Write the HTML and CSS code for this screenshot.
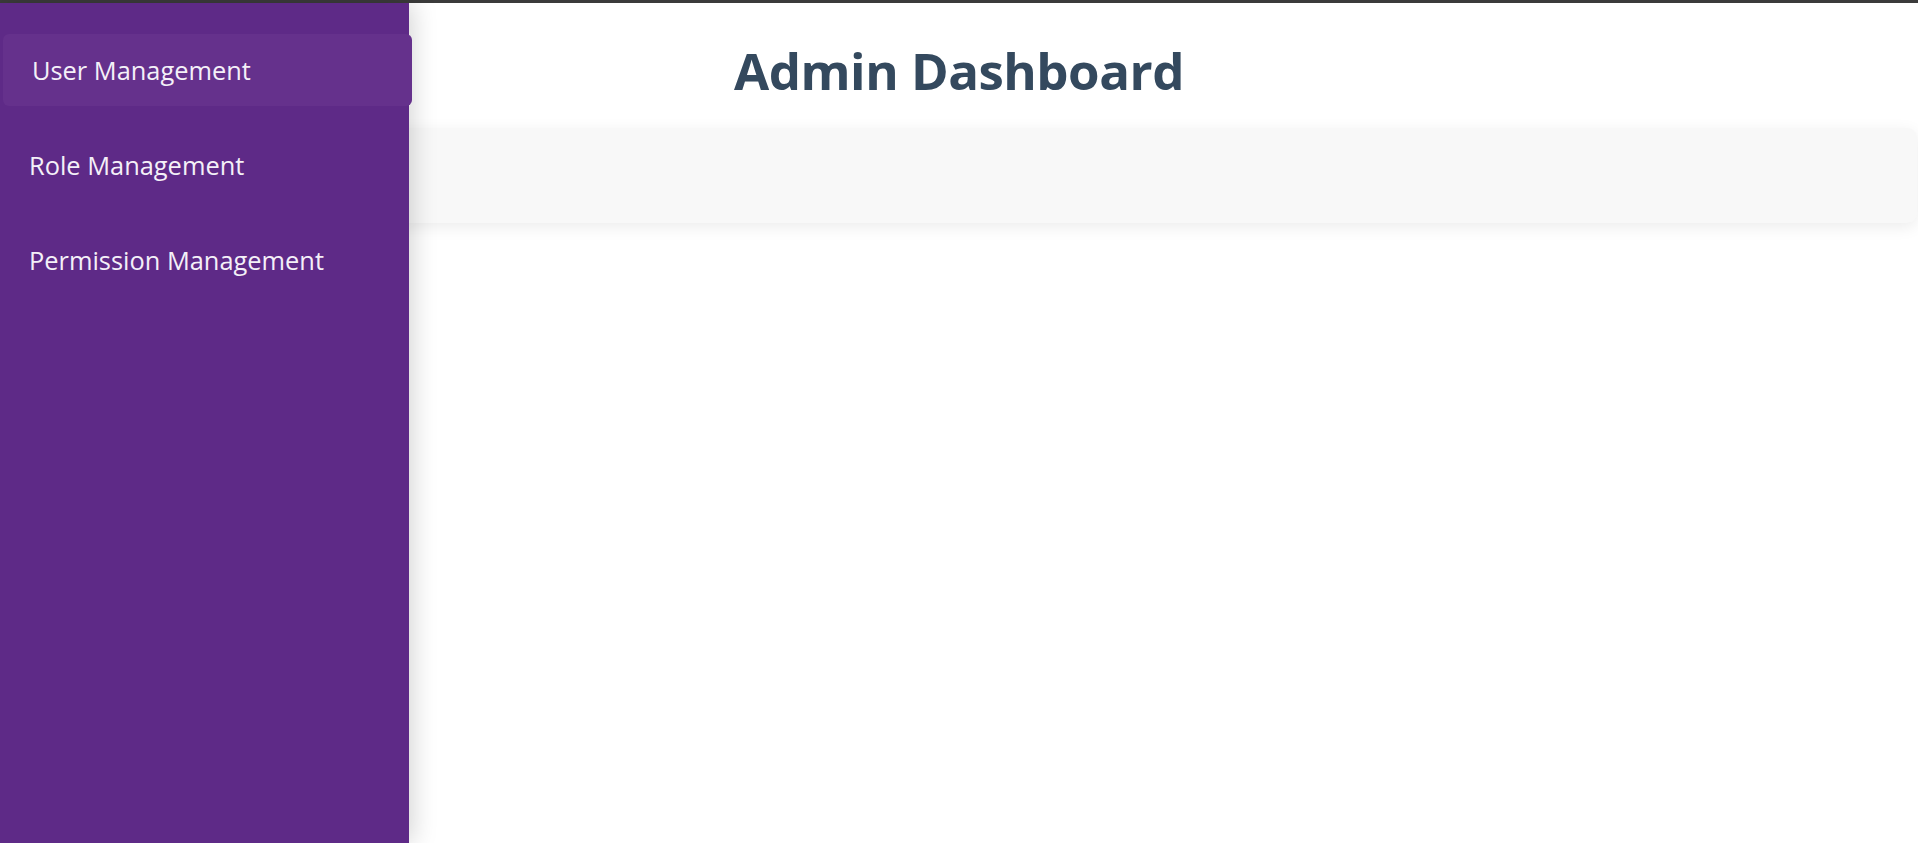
FILE: index.html
```html
<!DOCTYPE html>
<html>
<head>
<meta charset="utf-8">
<link rel="stylesheet" href="styles.css">
</head>
<body>
<div class="topline"></div>
<div class="page">
  <aside class="sidebar">
    <nav class="nav">
      <div class="nav-item active">User Management</div>
      <div class="nav-item">Role Management</div>
      <div class="nav-item">Permission Management</div>
    </nav>
  </aside>
  <main class="main">
    <header class="header">
      <h1 class="title">Admin Dashboard</h1>
    </header>
    <section class="card"></section>
  </main>
</div>
</body>
</html>
```

FILE: styles.css
```css
html, body {
  margin: 0;
  padding: 0;
  height: 100%;
  background: #ffffff;
  font-family: "Open Sans", "Noto Sans", sans-serif;
  overflow: hidden;
}

.topline {
  height: 3px;
  background: #3b3b3b;
}

.page {
  position: relative;
  height: calc(100% - 3px);
}

.sidebar {
  position: absolute;
  top: 0;
  left: 0;
  bottom: 0;
  width: 409px;
  background: #5e2a87;
  box-shadow: 3px 0 24px rgba(0, 0, 0, 0.18);
  z-index: 2;
}

.nav {
  display: flex;
  flex-direction: column;
  gap: 23px;
  padding-top: 31px;
}

.nav-item {
  height: 72px;
  display: flex;
  align-items: center;
  padding-left: 29px;
  color: #f4f0f8;
  font-size: 25.4px;
  border-radius: 6px;
}

.nav-item.active {
  background: #65318c;
  transform: translateX(3px);
}

.main {
  display: flex;
  flex-direction: column;
}

.header {
  height: 125px;
  display: flex;
  justify-content: center;
}

.title {
  margin: 0;
  padding-top: 37px;
  font-size: 51px;
  font-weight: 700;
  color: #34495e;
  line-height: 1.2;
  letter-spacing: -0.5px;
}

.card {
  height: 95px;
  margin-right: 1px;
  background: #f8f8f8;
  border-radius: 10px;
  box-shadow: 0 4px 16px rgba(0, 0, 0, 0.08);
}
```
